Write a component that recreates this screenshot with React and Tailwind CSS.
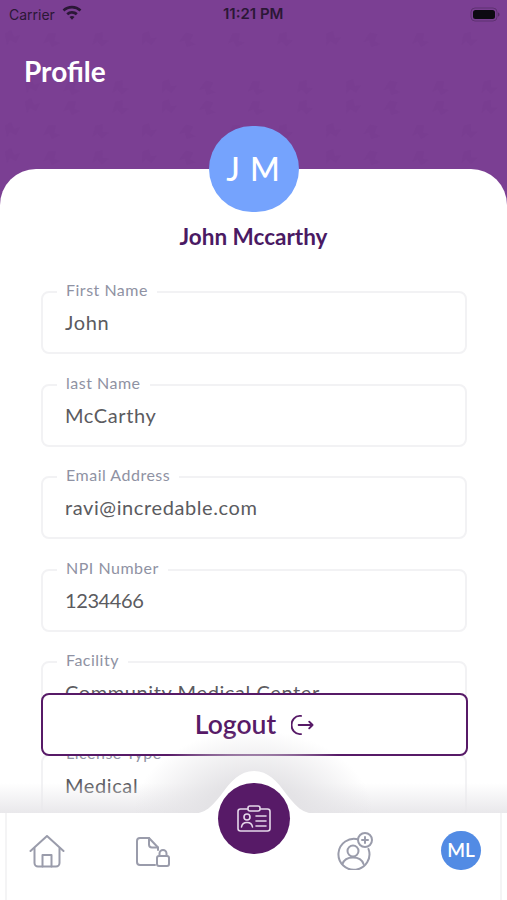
const font = { fontFamily: '"Lato", "Noto Sans", sans-serif' };

function Field({ label, value, numeric }) {
  return (
    <div className="relative h-[63px] rounded-[8px] border-2 border-[#f2f2f4] bg-white px-[22px]">
      <span className="absolute left-[14px] top-[-14px] bg-white px-[9px] text-[16px] leading-[22px] tracking-[0.5px] text-[#8f92a3]">{label}</span>
      <div className={"pt-[14px] text-[20px] leading-[30px] text-[#5b5b60] " + (numeric ? "tracking-[-0.4px]" : "tracking-[0.6px]")}>{value}</div>
    </div>
  );
}

function Pattern() {
  const marks = [];
  const rows = [30, 98, 122, 78, 148];
  for (let r = 0; r < 5; r++) {
    for (let c = 0; c < 12; c++) {
      marks.push(
        <g key={r + "-" + c} transform={`translate(${c * 46 + (r % 2) * 20 + 5} ${rows[r]}) rotate(${(c * 37) % 50})`}>
          <path d="M0 4 L6 0 L9 7 L15 5 L11 13 L5 10 L2 15 Z" fill="#6f3786" opacity="0.16" />
        </g>
      );
    }
  }
  return (
    <svg className="absolute inset-0" width="507" height="172" aria-hidden="true">{marks}</svg>
  );
}

function Wifi() {
  return (
    <svg width="20" height="15" viewBox="0 0 20 15" fill="#2b1736">
      <path d="M10 .8c3.6 0 6.9 1.4 9.4 3.7l-1.8 2A11 11 0 0 0 10 3.5c-2.9 0-5.6 1.1-7.6 3l-1.8-2A13.7 13.7 0 0 1 10 .8z" />
      <path d="M10 6c2.2 0 4.2.8 5.7 2.2l-1.8 2A5.8 5.8 0 0 0 10 8.7c-1.5 0-2.9.6-3.9 1.5l-1.8-2A8.4 8.4 0 0 1 10 6z" />
      <path d="M10 11c1 0 1.9.4 2.5 1L10 14.8 7.5 12c.6-.6 1.5-1 2.5-1z" />
    </svg>
  );
}

function Battery() {
  return (
    <svg width="30" height="15" viewBox="0 0 30 15">
      <rect x="1" y="1" width="26" height="13" rx="4" fill="none" stroke="#2b1736" strokeOpacity="0.35" />
      <rect x="3" y="3" width="22" height="9" rx="2.5" fill="#0d0a12" />
      <path d="M28 5.5c1 .3 1.5 1 1.5 2s-.5 1.7-1.5 2z" fill="#2b1736" fillOpacity="0.45" />
    </svg>
  );
}

function HomeIcon() {
  return (
    <svg width="36" height="33" viewBox="0 0 36 33" fill="none" stroke="#9a9cab" strokeWidth="2" strokeLinecap="round" strokeLinejoin="round">
      <path d="M1.5 16 L18 1 L34.5 16" />
      <path d="M5.5 13.5 V28 a3.5 3.5 0 0 0 3.5 3.5 H27 a3.5 3.5 0 0 0 3.5 -3.5 V13.5" />
      <path d="M13.5 31.5 V20 H22.5 V31.5" />
    </svg>
  );
}

function FileLockIcon() {
  return (
    <svg width="34" height="30" viewBox="0 0 34 30" fill="none" stroke="#9a9cab" strokeWidth="2" strokeLinecap="round" strokeLinejoin="round">
      <path d="M19 28 H4 a3 3 0 0 1 -3 -3 V4 a3 3 0 0 1 3 -3 H13 L22 10.5 V13" />
      <path d="M13 1 V7.5 a3 3 0 0 0 3 3 H22" />
      <rect x="21" y="19" width="12" height="10" rx="2" />
      <path d="M23.5 19 V16.5 a3.5 3.5 0 0 1 7 0 V19" />
    </svg>
  );
}

function UserAddIcon() {
  return (
    <svg width="38" height="38" viewBox="0 0 38 38" fill="none" stroke="#9a9cab" strokeWidth="2" strokeLinecap="round" strokeLinejoin="round">
      <path d="M22.5 7.5 A15.5 15.5 0 1 0 32.5 17" />
      <circle cx="17" cy="19" r="5.5" />
      <path d="M6.5 32 C8 27.5 12 25.5 17 25.5 C22 25.5 26 27.5 27.5 32" />
      <circle cx="29" cy="8" r="7" fill="#fff" />
      <path d="M29 5 V11 M26 8 H32" />
    </svg>
  );
}

function BadgeIcon() {
  return (
    <svg width="34" height="27" viewBox="0 0 34 27" fill="none" stroke="#e5d7ea" strokeWidth="1.6" strokeLinecap="round" strokeLinejoin="round">
      <rect x="1" y="4" width="32" height="22" rx="2.5" />
      <rect x="11" y="1" width="12" height="5" rx="2" fill="#571a67" />
      <circle cx="10" cy="12" r="3" />
      <path d="M4.5 22 C5 18.5 7 17.5 10 17.5 C13 17.5 15 18.5 15.5 22" />
      <path d="M19 11 H29 M19 16 H29 M19 21 H29" />
    </svg>
  );
}

function LogoutIcon() {
  return (
    <svg width="23" height="22" viewBox="0 0 24 22" fill="none" stroke="#571a67" strokeWidth="2" strokeLinecap="round" strokeLinejoin="round">
      <path d="M10.5 1.5 H9 A8.5 9.5 0 0 0 9 20.5 H10.5" />
      <path d="M8 11 H22.5 M19 7.5 L22.5 11 L19 14.5" />
    </svg>
  );
}

export default function App() {
  return (
    <div className="relative flex h-[900px] w-[507px] flex-col overflow-hidden bg-[#7b3f93]" style={font}>
      <Pattern />
      <div className="relative flex h-[28px] items-center justify-between pl-[9px] pr-[7px] pt-[1px] text-[#2b1736]">
        <div className="flex items-center gap-[7px] text-[14px]" style={{ fontFamily: "Inter, sans-serif" }}>
          <span>Carrier</span>
          <span className="mt-[-4px]"><Wifi /></span>
        </div>
        <span className="absolute left-[223px] text-[15px] font-semibold" style={{ fontFamily: "Inter, sans-serif" }}>11:21 PM</span>
        <Battery />
      </div>
      <h1 className="relative ml-[24px] mt-[24px] text-[28px] font-bold leading-[38px] text-white">Profile</h1>

      <main className="relative mt-[79px] flex-1 rounded-t-[36px] bg-white">
        <div className="mx-auto -mt-[43px] flex h-[86px] w-[90px] items-center justify-center rounded-full bg-[#75a3fd] text-[32px] font-medium tracking-[1px] text-white">
          J M
        </div>
        <p className="mt-[11px] text-center text-[22.5px] font-bold leading-[28px] text-[#4a1a63]">John Mccarthy</p>
        <div className="ml-[41px] mr-[40px] mt-[40px] flex flex-col gap-[29.5px]">
          <Field label="First Name" value="John" />
          <Field label="last Name" value="McCarthy" />
          <Field label="Email Address" value="ravi@incredable.com" />
          <Field label="NPI Number" value="1234466" numeric />
          <Field label="Facility" value="Community Medical Center" />
          <Field label="License Type" value="Medical" />
        </div>
      </main>

      <button className="absolute left-[41px] top-[693px] flex h-[63px] w-[427px] items-center justify-center gap-[15px] rounded-[8px] border-2 border-[#571a67] bg-white text-[26.5px] font-semibold text-[#571a67]">
        <span>Logout</span>
        <LogoutIcon />
      </button>

      <div className="absolute inset-x-0 bottom-[87px] h-[30px] bg-gradient-to-b from-[#e8e7ea00] to-[#e9e8eb]" />
      <div className="absolute left-[133px] top-[730px] h-[85px] w-[240px] bg-[radial-gradient(ellipse_50%_100%_at_center_bottom,#e4e3e6_40%,#e8e7ea00_100%)]" />

      <nav className="absolute inset-x-0 bottom-0 h-[87px]">
        <svg className="absolute left-[190px] top-[-43px]" width="128" height="44" viewBox="0 0 128 44" aria-hidden="true">
          <path d="M0 44 C16 44 22 36 31 25 C41 11 50 1 64 1 C78 1 87 11 97 25 C106 36 112 44 128 44 Z" fill="#fff" />
        </svg>
        <div className="mx-[5px] flex h-full items-start border-x-2 border-[#f4f4f5] bg-white pl-[22px] pt-[22px]">
          <HomeIcon />
          <span className="ml-[71px] mt-[2px]"><FileLockIcon /></span>
          <span className="ml-[166px] mt-[-3px]"><UserAddIcon /></span>
          <div className="ml-[67px] mt-[-4px] flex h-[39px] w-[40px] items-center justify-center rounded-full bg-[#528be4] text-[19px] font-semibold text-white">ML</div>
        </div>
        <div className="absolute left-[218px] top-[-30px] flex h-[71px] w-[72px] items-center justify-center rounded-full bg-[#571a67]">
          <BadgeIcon />
        </div>
      </nav>
    </div>
  );
}
